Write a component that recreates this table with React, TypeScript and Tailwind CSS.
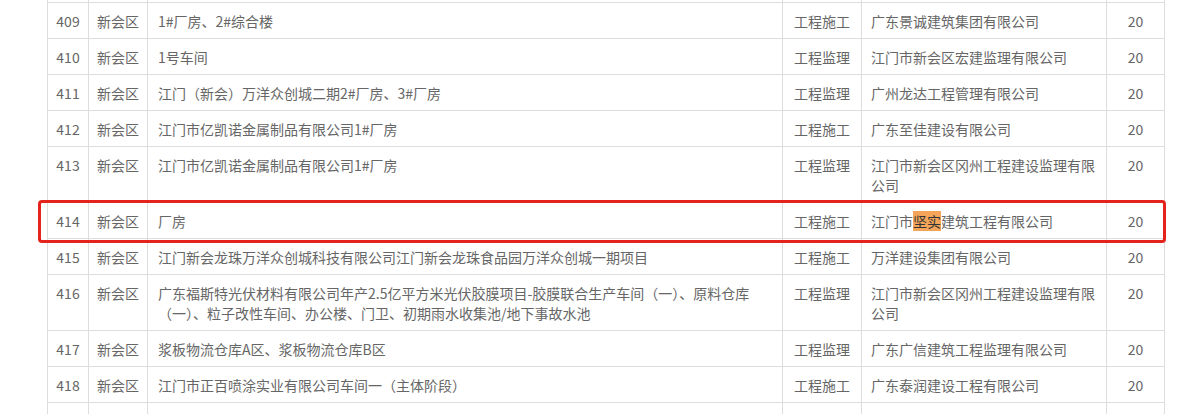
import React from "react";

type Row = {
  no: number | "";
  area: string;
  name: string;
  kind: string;
  company: React.ReactNode;
  score: number | "";
};

// blank rows above and below only show their grid lines at the window edges
const blank = (key: string): Row & { key: string } => ({
  key,
  no: "",
  area: "",
  name: "",
  kind: "",
  company: "",
  score: "",
});

const rows: (Row & { key: string })[] = [
  blank("top"),
  { key: "409", no: 409, area: "新会区", name: "1#厂房、2#综合楼", kind: "工程施工", company: "广东景诚建筑集团有限公司", score: 20 },
  { key: "410", no: 410, area: "新会区", name: "1号车间", kind: "工程监理", company: "江门市新会区宏建监理有限公司", score: 20 },
  { key: "411", no: 411, area: "新会区", name: "江门（新会）万洋众创城二期2#厂房、3#厂房", kind: "工程监理", company: "广州龙达工程管理有限公司", score: 20 },
  { key: "412", no: 412, area: "新会区", name: "江门市亿凯诺金属制品有限公司1#厂房", kind: "工程施工", company: "广东至佳建设有限公司", score: 20 },
  { key: "413", no: 413, area: "新会区", name: "江门市亿凯诺金属制品有限公司1#厂房", kind: "工程监理", company: "江门市新会区冈州工程建设监理有限公司", score: 20 },
  {
    key: "414",
    no: 414,
    area: "新会区",
    name: "厂房",
    kind: "工程施工",
    company: (
      <>
        江门市<span className="bg-[#f4a55a] text-[#333]">坚实</span>建筑工程有限公司
      </>
    ),
    score: 20,
  },
  { key: "415", no: 415, area: "新会区", name: "江门新会龙珠万洋众创城科技有限公司江门新会龙珠食品园万洋众创城一期项目", kind: "工程施工", company: "万洋建设集团有限公司", score: 20 },
  {
    key: "416",
    no: 416,
    area: "新会区",
    name: "广东福斯特光伏材料有限公司年产2.5亿平方米光伏胶膜项目-胶膜联合生产车间（一）、原料仓库（一）、粒子改性车间、办公楼、门卫、初期雨水收集池/地下事故水池",
    kind: "工程监理",
    company: "江门市新会区冈州工程建设监理有限公司",
    score: 20,
  },
  { key: "417", no: 417, area: "新会区", name: "浆板物流仓库A区、浆板物流仓库B区", kind: "工程监理", company: "广东广信建筑工程监理有限公司", score: 20 },
  { key: "418", no: 418, area: "新会区", name: "江门市正百喷涂实业有限公司车间一（主体阶段）", kind: "工程施工", company: "广东泰润建设工程有限公司", score: 20 },
  blank("bottom"),
];

const cell = "h-[36px] border border-[#dddddd] pt-2 pb-[7px] align-top";

export default function App() {
  return (
    <div
      className="relative h-[414px] overflow-hidden bg-white text-[14px] leading-[20px] text-[#666666]"
      style={{ fontFamily: '"Microsoft YaHei", "Noto Sans CJK SC", sans-serif' }}
    >
      <table className="ml-[47px] -mt-[34px] w-[1117px] table-fixed border-collapse">
        <colgroup>
          <col className="w-[41px]" />
          <col className="w-[59px]" />
          <col className="w-[635px]" />
          <col className="w-[79px]" />
          <col className="w-[245px]" />
          <col className="w-[58px]" />
        </colgroup>
        <tbody>
          {rows.map((row) => (
            <tr key={row.key}>
              <td className={`${cell} text-center`}>{row.no}</td>
              <td className={`${cell} text-center`}>{row.area}</td>
              <td className={`${cell} px-[10px]`}>{row.name}</td>
              <td className={`${cell} text-center`}>{row.kind}</td>
              <td className={`${cell} pl-[9px] pr-[10px]`}>{row.company}</td>
              <td className={`${cell} text-center`}>{row.score}</td>
            </tr>
          ))}
        </tbody>
      </table>

      {/* highlight around row 414 */}
      <div className="pointer-events-none absolute left-[38px] top-[200px] h-[43px] w-[1128px] rounded-[4px] border-[3px] border-[#e5231d]" />
    </div>
  );
}
